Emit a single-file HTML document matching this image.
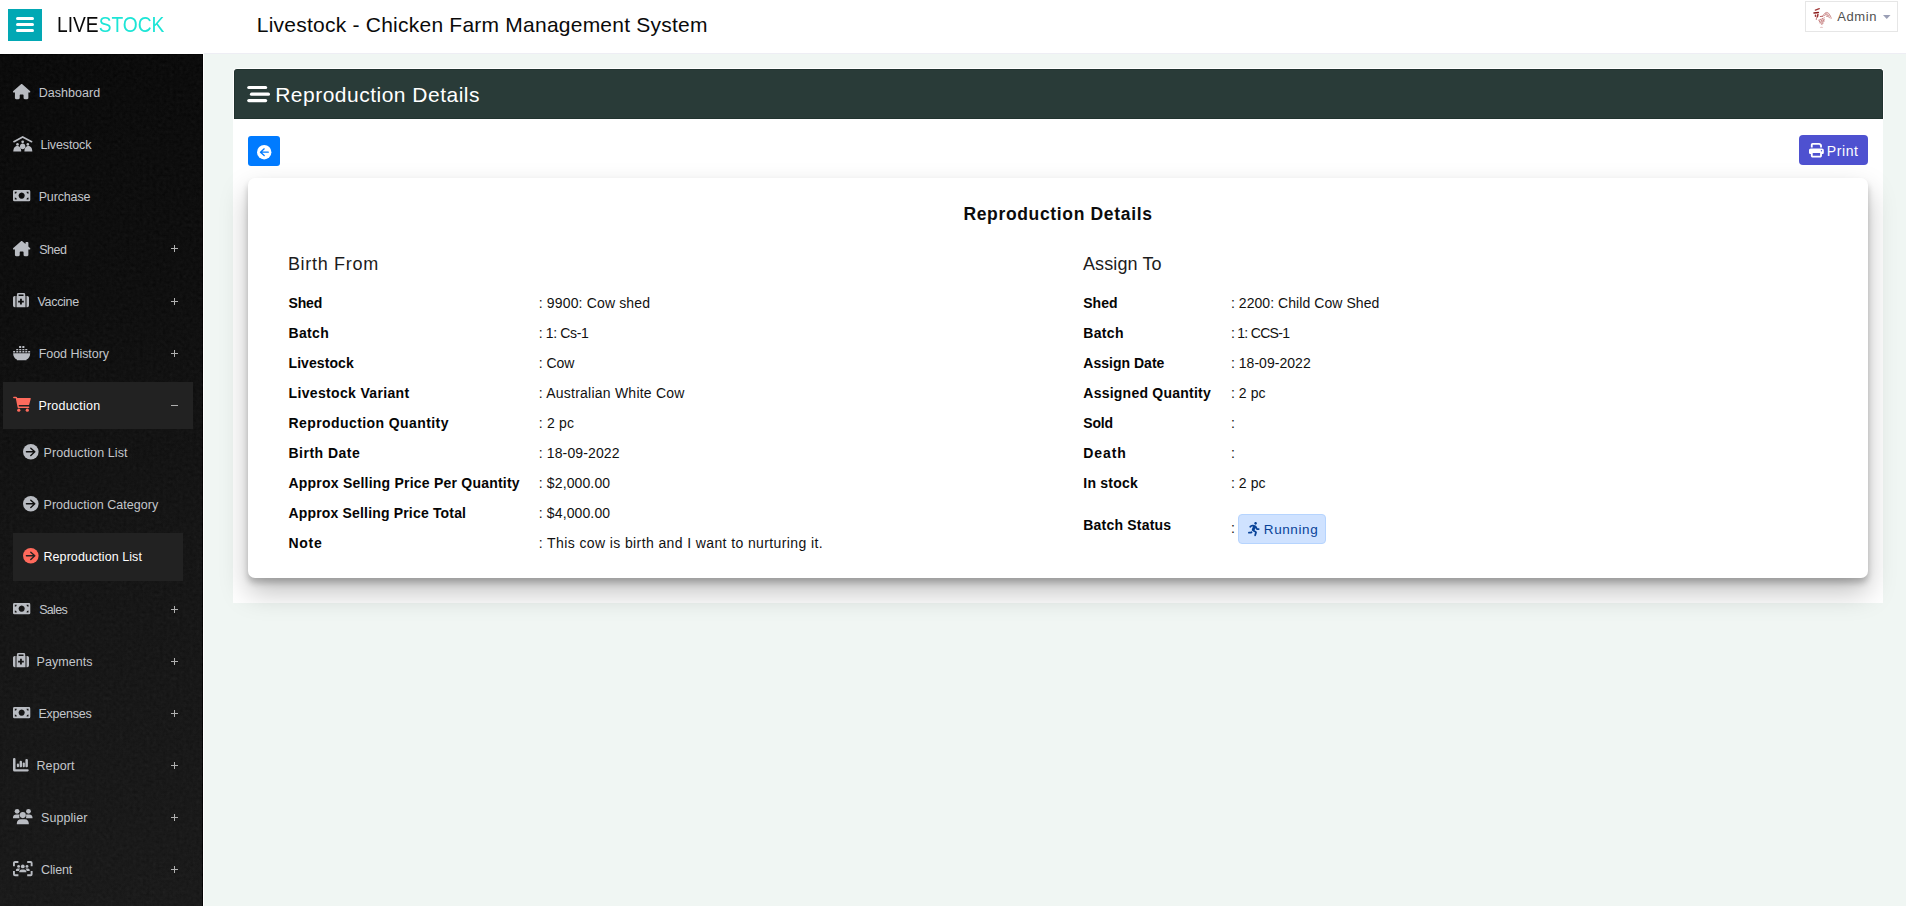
<!DOCTYPE html>
<html lang="en">
<head>
<meta charset="utf-8">
<title>Livestock - Chicken Farm Management System</title>
<style>
*{box-sizing:border-box;margin:0;padding:0}
html,body{width:1906px;height:906px;overflow:hidden}
body{background:#f0f6f3;font-family:"Liberation Sans",sans-serif;font-size:14px;color:#111;position:relative}
.abs{position:absolute}
svg{display:block;overflow:visible}
.t{position:absolute;white-space:nowrap;font-family:"Liberation Sans",sans-serif}
#top{position:absolute;left:0;top:0;width:1906px;height:54px;background:#fff;border-bottom:1px solid #eeeef4}
#gap{position:absolute;left:0;top:53px;width:204px;height:853px;background:#fff}
#burger{position:absolute;left:8px;top:9px;width:34px;height:32px;background:#02a8b4}
#burger i{position:absolute;left:8px;width:18px;height:3px;border-radius:1.500px;background:#fff}
#admin{position:absolute;left:1805px;top:1px;width:93px;height:31px;border:1px solid #e6e6e6;background:#fff}
#caret{position:absolute;left:1883.100px;top:15px;width:0;height:0;border-left:3.750px solid transparent;border-right:3.750px solid transparent;border-top:3.900px solid #9a9fb5}
#side{position:absolute;left:0;top:54px;width:203px;height:852px;border-top:1px solid #000;border-right:1px solid #000;background:linear-gradient(168deg,#060606 0%,#0a0a0a 30%,#111 58%,#161616 100%)}
.hl{position:absolute;background:#222}
.pl{position:absolute;background:#b0b0b0}
#panel{position:absolute;left:233px;top:68px;width:1650px;height:535px;background:#fff;border-radius:4px 4px 0 0}
#phead{position:absolute;left:233px;top:68px;width:1651px;height:51px;background:#293b38;border-radius:4px 4px 0 0;border:1px solid #fff;border-bottom:0;box-shadow:inset 0 0 0 1px #21332f}
#back{position:absolute;left:248px;top:136px;width:32px;height:30px;background:#007bff;border-radius:3px}
#print{position:absolute;left:1799px;top:135px;width:69px;height:30px;background:#4e51d0;border-radius:4px}
#card{position:absolute;left:248px;top:178px;width:1620px;height:400px;background:#fff;border-radius:7px;box-shadow:0 14px 28px rgba(0,0,0,.25),0 5px 6px rgba(0,0,0,.22)}
#badge{position:absolute;left:1238px;top:514px;width:88px;height:30px;background:#cfe2ff;border:1px solid #b6d4fe;border-radius:4px}
</style>
</head>
<body>
<div id="top"></div>
<div id="burger"><i style="top:8px"></i><i style="top:14px"></i><i style="top:20px"></i></div>
<div id="admin"></div>
<svg class="abs" style="left:1808px;top:4px" width="30" height="26" viewBox="0 0 30 26"><g fill="none" stroke-linecap="round" stroke-linejoin="round"><path stroke="#8b0a0a" stroke-width="1.300" opacity=".8" d="M7.400 6.200L11.300 4.700"/><path stroke="#7d0000" stroke-width="1.500" opacity=".9" d="M6 8.900L10.400 8.400"/><path stroke="#8b0a0a" stroke-width="1.500" opacity=".85" d="M7.500 11.200v1M9.900 10.600l-0.500 2.200"/><path stroke="#9a1c1c" stroke-width="1" opacity=".6" d="M8.500 13.800l-0.200 1.700"/><path stroke="#9a1c1c" stroke-width="1" opacity=".7" d="M12.300 12.500l2.400-0.300"/><path stroke="#a02a2a" stroke-width="0.900" opacity=".55" d="M14.800 12.200c1-2.200 2.400-3.700 3.900-3.800c1.800-0.100 3.300 2.400 4.600 5.800M16 11.800c1.300-1.500 3-1.600 4.300 0.200M17.300 9.800c1.500-0.500 3 0.300 3.900 2.200M18.500 12.300c1.400 0 2.600 0.800 3.600 1.900"/><path stroke="#a02a2a" stroke-width="0.800" opacity=".5" d="M10.800 16.300l5.800-2.600M11.300 17.800l5.300-2.400M12 19l4.300-2.200M13.300 20.300l2.200-1.400M11 15.800c0.300 2 1.500 3.700 3.200 4.700M14.500 14.500l1.500 3M12.800 15.200l1.800 3.800"/></g><ellipse cx="13.500" cy="23.300" rx="1.600" ry=".5" fill="#a33" opacity=".35"/></svg>
<svg class="abs" style="left:1883.100px;top:15px" width="7.500" height="3.900" viewBox="0 0 7.500 3.900"><path fill="#9a9fb5" d="M0 0h7.500L3.750 3.900z"/></svg>
<div id="gap"></div>
<div id="side"></div>
<svg class="abs" style="left:0;top:54px" width="203" height="852"><filter id="nz" x="0" y="0" width="100%" height="100%"><feTurbulence type="fractalNoise" baseFrequency="0.300" numOctaves="3" seed="3"/><feColorMatrix type="matrix" values="0 0 0 0 1  0 0 0 0 1  0 0 0 0 1  0.330 0.330 0.330 0 -0.250"/></filter><rect width="203" height="852" filter="url(#nz)" opacity=".085"/></svg>
<div class="hl" style="left:3px;top:382px;width:190px;height:47px"></div>
<div class="hl" style="left:13px;top:533px;width:170px;height:47.500px"></div>
<svg class="abs" style="left:12.7px;top:83.7px" width="17.3" height="15.3" viewBox="0 0 576 512" preserveAspectRatio="none"><path fill="#b9bcc2" d="M575.8 255.5c0 18-15 32.1-32 32.1h-32l.7 160.2c0 2.700-.2 5.400-.5 8.100V472c0 22.100-17.900 40-40 40H456c-1.100 0-2.200 0-3.300-.1c-1.400.1-2.800.1-4.200.1H416 392c-22.100 0-40-17.900-40-40V448 384c0-17.700-14.300-32-32-32H256c-17.700 0-32 14.300-32 32v64 24c0 22.100-17.900 40-40 40H160 128.100c-1.500 0-3-.100-4.500-.200c-1.200.100-2.400.200-3.600.200H104c-22.100 0-40-17.900-40-40V360c0-.900 0-1.900.100-2.800V287.600H32c-18 0-32-14-32-32.100c0-9 3-17 10-24L266.400 8c7-7 15-8 22-8s15 2 21 7L564.800 231.500c8 7 12 15 11 24z"/></svg>
<svg class="abs" style="left:12.7px;top:135.7px" width="19.5" height="15.4" viewBox="0 0 19.5 15.4" ><path fill="none" stroke="#b9bcc2" stroke-width="1.700" stroke-linecap="round" stroke-linejoin="miter" d="M0.900 5.700L9.660 0.950L18.600 5.700"/><g fill="#b9bcc2"><circle cx="4.500" cy="8.400" r="1.350"/><circle cx="9.660" cy="5.800" r="1.350"/><circle cx="14.800" cy="8.400" r="1.350"/><path d="M0.300 15.400C0.300 11.600 2.400 9.900 4.300 9.900S8.200 11.600 8.200 15.400z"/><path d="M11.400 15.400C11.400 11.600 13.400 9.900 15.350 9.900S19.300 11.600 19.300 15.400z"/><path d="M6.900 10.800C6.900 8.600 8.300 7.500 9.660 7.500S12.400 8.600 12.400 10.800C12.400 12.400 11 13.200 9.660 13.200S6.900 12.400 6.900 10.800z"/></g></svg>
<svg class="abs" style="left:12.7px;top:189.9px" width="17.3" height="11.3" viewBox="0 0 17.3 11.3" ><path fill="#b9bcc2" fill-rule="evenodd" d="M1.4 0h14.5a1.4 1.4 0 0 1 1.400 1.400v8.500a1.400 1.400 0 0 1-1.400 1.400H1.400A1.400 1.400 0 0 1 0 9.900V1.400A1.400 1.400 0 0 1 1.400 0zM8.650 2.600a3.050 3.050 0 1 0 .001 0zM1.800 1.800v2a2 2 0 0 0 2-2zM15.500 1.800h-2a2 2 0 0 0 2 2zM1.800 9.500h2a2 2 0 0 0-2-2zM15.500 9.500v-2a2 2 0 0 0-2 2z"/></svg>
<svg class="abs" style="left:12.7px;top:240.8px" width="17.3" height="15.3" viewBox="0 0 576 512" preserveAspectRatio="none"><path fill="#b9bcc2" d="M543.8 287.6c17 0 32-14 32-32.1c1-9-3-17-11-24L512 185V64c0-17.700-14.300-32-32-32H448c-17.700 0-32 14.300-32 32v36.700L309.500 7c-6-5-14-7-21-7s-15 1-22 8L10 231.500c-7 7-10 15-10 24c0 18 14 32.100 32 32.100h32v69.700c-.100.900-.100 1.800-.100 2.800V472c0 22.100 17.900 40 40 40h16c1.200 0 2.400-.100 3.600-.200c1.500.100 3 .200 4.500.200H160h24c22.100 0 40-17.900 40-40V448 384c0-17.700 14.300-32 32-32h64c17.700 0 32 14.300 32 32v64 24c0 22.100 17.900 40 40 40h24 32.500c1.400 0 2.800 0 4.200-.100c1.100.100 2.200.100 3.300.100h16c22.100 0 40-17.900 40-40V455.800c.300-2.600.500-5.300.500-8.100l-.700-160.200h32z"/></svg>
<i class="pl" style="left:171px;top:248.4px;width:7px;height:1px"></i><i class="pl" style="left:174px;top:245.4px;width:1px;height:7px"></i>
<svg class="abs" style="left:12.6px;top:292.8px" width="16.0" height="14.3" viewBox="0 0 16.0 14.3" ><path fill="#b9bcc2" fill-rule="evenodd" d="M5.400 0h5.300a1.500 1.500 0 0 1 1.500 1.500v1.500h-1.700v-1.500h-4.900v1.500h-1.700v-1.500a1.500 1.500 0 0 1 1.500-1.500zM1.700 2.900h0.800v11.400h-0.800a1.700 1.700 0 0 1-1.700-1.700v-8a1.700 1.700 0 0 1 1.700-1.700zM13.500 2.900h0.800a1.700 1.700 0 0 1 1.700 1.700v8a1.700 1.700 0 0 1-1.700 1.700h-0.800zM3.500 2.900h9v11.400h-9zM7.050 5.700h1.800v1.950h1.950v1.800h-1.950v1.950h-1.800v-1.950h-1.950v-1.800h1.950z"/></svg>
<i class="pl" style="left:171px;top:300.6px;width:7px;height:1px"></i><i class="pl" style="left:174px;top:297.6px;width:1px;height:7px"></i>
<svg class="abs" style="left:12.8px;top:345.8px" width="17.3" height="14.3" viewBox="0 0 17.3 14.3" ><g fill="#b9bcc2"><path d="M0.100 7.200H17.200C17.200 10.500 15.600 12.600 13.500 13.600V14.300H3.900V13.600C1.800 12.600 0.100 10.500 0.100 7.200z"/><rect x="6.1" y="0" width="2.100" height="2.100" rx=".3"/><rect x="9.3" y="0" width="2.100" height="2.100" rx=".3"/><rect x="3.2" y="2.900" width="2.100" height="1.400" rx=".3"/><rect x="6.2" y="2.900" width="2.100" height="1.400" rx=".3"/><rect x="9.3" y="2.900" width="2.100" height="1.400" rx=".3"/><rect x="12.2" y="2.900" width="2.100" height="1.400" rx=".3"/><rect x="0.1" y="5.100" width="2.100" height="1.500" rx=".3"/><rect x="3.2" y="5.100" width="2.100" height="1.500" rx=".3"/><rect x="6.2" y="5.100" width="2.100" height="1.500" rx=".3"/><rect x="9.3" y="5.100" width="2.100" height="1.500" rx=".3"/><rect x="12.2" y="5.100" width="2.100" height="1.500" rx=".3"/><rect x="15.1" y="5.100" width="2.100" height="1.500" rx=".3"/></g></svg>
<i class="pl" style="left:171px;top:352.8px;width:7px;height:1px"></i><i class="pl" style="left:174px;top:349.8px;width:1px;height:7px"></i>
<svg class="abs" style="left:12.8px;top:396.4px" width="17.9" height="15.8" viewBox="0 0 17.9 15.8" ><path fill="#ff6a5c" d="M3.600 1.900H17.200a.6 .6 0 0 1 .580 .760L16.200 8.400a.900 .900 0 0 1-.870 .650H5.100z"/><path fill="none" stroke="#ff6a5c" stroke-width="1.500" stroke-linecap="round" stroke-linejoin="round" d="M0.850 1.500H2.750a.800 .800 0 0 1 .780 .640L5.300 11.200H15.600"/><circle cx="5.800" cy="14.200" r="1.600" fill="#ff6a5c"/><circle cx="14.300" cy="14.200" r="1.600" fill="#ff6a5c"/></svg>
<i class="pl" style="left:171px;top:405.1px;width:7px;height:1px"></i>
<svg class="abs" style="left:22.7px;top:443.6px" width="15.6" height="15.6" viewBox="0 0 16 16" ><circle cx="8" cy="8" r="8" fill="#b9bcc2"/><path fill="none" stroke="#0e0e0e" stroke-width="1.45" stroke-linecap="round" stroke-linejoin="round" d="M3.500 8H12M8 4.300L12.100 8L8 11.700"/></svg>
<svg class="abs" style="left:22.7px;top:495.5px" width="15.6" height="15.6" viewBox="0 0 16 16" ><circle cx="8" cy="8" r="8" fill="#b9bcc2"/><path fill="none" stroke="#0f0f0f" stroke-width="1.45" stroke-linecap="round" stroke-linejoin="round" d="M3.500 8H12M8 4.300L12.100 8L8 11.700"/></svg>
<svg class="abs" style="left:22.7px;top:547.6px" width="15.6" height="15.6" viewBox="0 0 16 16" ><circle cx="8" cy="8" r="8" fill="#ff6a5c"/><path fill="none" stroke="#222" stroke-width="1.45" stroke-linecap="round" stroke-linejoin="round" d="M3.500 8H12M8 4.300L12.100 8L8 11.700"/></svg>
<svg class="abs" style="left:12.7px;top:603.0px" width="17.3" height="11.3" viewBox="0 0 17.3 11.3" ><path fill="#b9bcc2" fill-rule="evenodd" d="M1.4 0h14.5a1.4 1.4 0 0 1 1.400 1.400v8.500a1.400 1.400 0 0 1-1.400 1.400H1.400A1.400 1.400 0 0 1 0 9.900V1.400A1.400 1.400 0 0 1 1.400 0zM8.650 2.600a3.050 3.050 0 1 0 .001 0zM1.800 1.800v2a2 2 0 0 0 2-2zM15.500 1.800h-2a2 2 0 0 0 2 2zM1.800 9.500h2a2 2 0 0 0-2-2zM15.500 9.500v-2a2 2 0 0 0-2 2z"/></svg>
<i class="pl" style="left:171px;top:609.1px;width:7px;height:1px"></i><i class="pl" style="left:174px;top:606.1px;width:1px;height:7px"></i>
<svg class="abs" style="left:12.6px;top:652.9px" width="16.0" height="14.3" viewBox="0 0 16.0 14.3" ><path fill="#b9bcc2" fill-rule="evenodd" d="M5.400 0h5.300a1.500 1.500 0 0 1 1.500 1.500v1.500h-1.700v-1.500h-4.900v1.500h-1.700v-1.500a1.500 1.500 0 0 1 1.500-1.500zM1.700 2.900h0.800v11.400h-0.800a1.700 1.700 0 0 1-1.700-1.700v-8a1.700 1.700 0 0 1 1.700-1.700zM13.500 2.900h0.800a1.700 1.700 0 0 1 1.700 1.700v8a1.700 1.700 0 0 1-1.700 1.700h-0.800zM3.500 2.900h9v11.400h-9zM7.050 5.700h1.800v1.950h1.950v1.800h-1.950v1.950h-1.800v-1.950h-1.950v-1.800h1.950z"/></svg>
<i class="pl" style="left:171px;top:661.2px;width:7px;height:1px"></i><i class="pl" style="left:174px;top:658.2px;width:1px;height:7px"></i>
<svg class="abs" style="left:12.7px;top:706.7px" width="17.3" height="11.3" viewBox="0 0 17.3 11.3" ><path fill="#b9bcc2" fill-rule="evenodd" d="M1.4 0h14.5a1.4 1.4 0 0 1 1.400 1.400v8.500a1.400 1.400 0 0 1-1.400 1.400H1.400A1.400 1.400 0 0 1 0 9.900V1.400A1.400 1.400 0 0 1 1.400 0zM8.650 2.600a3.050 3.050 0 1 0 .001 0zM1.800 1.800v2a2 2 0 0 0 2-2zM15.500 1.800h-2a2 2 0 0 0 2 2zM1.800 9.500h2a2 2 0 0 0-2-2zM15.500 9.500v-2a2 2 0 0 0-2 2z"/></svg>
<i class="pl" style="left:171px;top:713.1px;width:7px;height:1px"></i><i class="pl" style="left:174px;top:710.1px;width:1px;height:7px"></i>
<svg class="abs" style="left:12.6px;top:757.8px" width="15.8" height="13.4" viewBox="0 0 15.8 13.4" ><g fill="#b9bcc2"><path d="M1.100 0h0.300a1.100 1.100 0 0 1 1.100 1.100v10.200h12.200a1.050 1.050 0 0 1 0 2.100h-13.200a1.500 1.500 0 0 1-1.500-1.500v-10.800a1.100 1.100 0 0 1 1.100-1.100z"/><rect x="3.850" y="5.400" width="2.150" height="3.900" rx="1"/><rect x="6.600" y="2.800" width="2.400" height="6.500" rx="1"/><rect x="9.700" y="4.500" width="2.150" height="4.800" rx="1"/><rect x="12.400" y="0.900" width="2.500" height="8.400" rx="1"/></g></svg>
<i class="pl" style="left:171px;top:765.1px;width:7px;height:1px"></i><i class="pl" style="left:174px;top:762.1px;width:1px;height:7px"></i>
<svg class="abs" style="left:12.6px;top:808.8px" width="19.5" height="15.2" viewBox="0 0 19.5 15.2" ><g fill="#b9bcc2"><circle cx="4.100" cy="2.300" r="2.400"/><circle cx="15.500" cy="2.300" r="2.400"/><circle cx="9.800" cy="6.100" r="3.050"/><path d="M3.100 5.450h2c0.700 0 1.200 0.150 1.600 0.400c-0.600 1.100-0.600 2.300-0.100 3.300h-6.600v-0.800c0-1.700 1.400-2.900 3.100-2.900z"/><path d="M16.400 5.450h-2c-0.700 0-1.200 0.150-1.600 0.400c0.600 1.100 0.600 2.300 0.100 3.300h6.600v-0.800c0-1.700-1.400-2.900-3.100-2.900z"/><path d="M7.700 10.200h4.200c2.300 0 3.900 1.800 3.900 4.100v0.900h-12v-0.900c0-2.300 1.600-4.100 3.900-4.100z"/></g></svg>
<i class="pl" style="left:171px;top:817.1px;width:7px;height:1px"></i><i class="pl" style="left:174px;top:814.1px;width:1px;height:7px"></i>
<svg class="abs" style="left:12.6px;top:860.9px" width="19.6" height="15.2" viewBox="0 0 19.6 15.2" ><g fill="none" stroke="#b9bcc2" stroke-width="1.900" stroke-linecap="butt" stroke-linejoin="round"><path d="M0.950 5.200v-3.250a1 1 0 0 1 1-1h3.450M14.200 0.950h3.450a1 1 0 0 1 1 1v3.250M18.650 10v3.250a1 1 0 0 1-1 1h-3.450M5.400 14.250h-3.450a1 1 0 0 1-1-1v-3.250"/></g><g fill="#b9bcc2"><circle cx="5.600" cy="5.400" r="1.450"/><circle cx="14" cy="5.400" r="1.450"/><circle cx="9.800" cy="5.400" r="1.900"/><path d="M4.600 7.400h1.900c0.300 0 0.500 0.050 0.700 0.150c-0.800 0.700-1.200 1.500-1.300 2.450h-2.600c-0.300 0-0.500-0.200-0.500-0.500c0-1.200 0.800-2.100 1.800-2.100z"/><path d="M15 7.400h-1.900c-0.300 0-0.500 0.050-0.700 0.150c0.800 0.700 1.200 1.500 1.300 2.450h2.600c0.300 0 0.500-0.200 0.500-0.500c0-1.200-0.800-2.100-1.800-2.100z"/><path d="M8.700 8.500h2.200c1.500 0 2.500 1.100 2.500 2.300a0.500 0.500 0 0 1-0.500 0.500h-6.200a0.500 0.500 0 0 1-0.500-0.500c0-1.200 1-2.300 2.500-2.300z"/></g></svg>
<i class="pl" style="left:171px;top:869.2px;width:7px;height:1px"></i><i class="pl" style="left:174px;top:866.2px;width:1px;height:7px"></i>
<div id="panel"></div>
<div id="phead"></div>
<svg class="abs" style="left:247px;top:85px" width="24" height="18" viewBox="0 0 24 18"><g fill="#fff"><rect x="0.200" y="0.900" width="20" height="3.200" rx="1.600"/><rect x="2.900" y="7.600" width="20.100" height="3.200" rx="1.600"/><rect x="0.200" y="14" width="20" height="3.200" rx="1.600"/></g></svg>
<div id="back"></div>
<svg class="abs" style="left:257px;top:144.6px" width="14.4" height="14.4" viewBox="0 0 16 16" ><circle cx="8" cy="8" r="8" fill="#fff"/><path transform="translate(16 0) scale(-1 1)" fill="none" stroke="#007bff" stroke-width="1.5" stroke-linecap="round" stroke-linejoin="round" d="M3.500 8H12M8 4.300L12.100 8L8 11.700"/></svg>
<div id="print"></div>
<svg class="abs" style="left:1809.1px;top:143.4px" width="14.8" height="14.6" viewBox="0 0 512 512" preserveAspectRatio="none"><path fill="#fff" d="M128 0C92.7 0 64 28.7 64 64v96h64V64H354.7L384 93.3V160h64V93.3c0-17-6.700-33.300-18.700-45.300L400 18.700C388 6.700 371.700 0 354.700 0H128zM384 352v32 64H128V384 368 352H384zm64 32h32c17.700 0 32-14.300 32-32V256c0-35.300-28.700-64-64-64H64c-35.300 0-64 28.700-64 64v96c0 17.700 14.300 32 32 32H64v64c0 35.300 28.700 64 64 64H384c35.300 0 64-28.700 64-64V384zM432 248a24 24 0 1 1 0 48 24 24 0 1 1 0-48z"/></svg>
<div id="card"></div>
<div id="badge"></div>
<svg class="abs" style="left:1247.8px;top:521.8px" width="11.6" height="14.2" viewBox="0 0 416 512" preserveAspectRatio="none"><path fill="#084298" d="M272 96c26.510 0 48-21.490 48-48S298.510 0 272 0s-48 21.490-48 48 21.490 48 48 48zM113.690 317.470l-14.800 34.520H32c-17.670 0-32 14.330-32 32s14.330 32 32 32h77.450c19.250 0 36.580-11.440 44.110-29.090l8.790-20.520-10.670-6.300c-17.320-10.230-30.060-25.370-37.990-42.610zM384 223.990h-44.030l-26.060-53.250c-12.500-25.550-35.450-44.230-61.780-50.940l-71.080-21.140c-28.300-6.800-57.770-.55-80.840 17.140l-39.670 30.410c-14.030 10.750-16.690 30.830-5.920 44.860s30.840 16.660 44.860 5.920l39.690-30.410c7.670-5.890 17.440-8 25.270-6.140l14.700 4.370-37.460 87.390c-12.620 29.480-1.310 64.010 26.300 80.310l84.980 50.170-27.470 87.730c-5.280 16.860 4.110 34.810 20.970 40.090 3.190 1 6.410 1.480 9.580 1.480 13.610 0 26.230-8.770 30.520-22.450l31.640-101.060c5.910-20.770-2.890-43.080-21.640-54.390l-61.240-36.140 31.310-78.280 20.270 41.430c8 16.340 24.920 26.890 43.110 26.890H384c17.670 0 32-14.330 32-32s-14.330-31.990-32-31.990z"/></svg>
<span class="t" style="left:57.01px;top:10px;font-size:21.5px;line-height:30px;color:#0a0a0a;transform:scaleX(0.8929);transform-origin:0 0">LIVE<b style="font-weight:400;color:#1de5d6">STOCK</b></span>
<span class="t" style="left:256.8px;top:10px;font-size:21px;line-height:29px;color:#0a0a0a;letter-spacing:0.233px">Livestock - Chicken Farm Management System</span>
<span class="t" style="left:1837.3px;top:8px;font-size:13px;line-height:18px;color:#505050;letter-spacing:0.57px">Admin</span>
<span class="t" style="left:38.7px;top:83px;font-size:12.5px;line-height:20px;color:#c3c6cb;letter-spacing:0.038px">Dashboard</span>
<span class="t" style="left:40.4px;top:135px;font-size:12.5px;line-height:20px;color:#c3c6cb;letter-spacing:-0.132px">Livestock</span>
<span class="t" style="left:38.7px;top:187px;font-size:12.5px;line-height:20px;color:#c3c6cb;letter-spacing:-0.151px">Purchase</span>
<span class="t" style="left:39.2px;top:240px;font-size:12.5px;line-height:20px;color:#c3c6cb;letter-spacing:-0.447px">Shed</span>
<span class="t" style="left:37.5px;top:292px;font-size:12.5px;line-height:20px;color:#c3c6cb;letter-spacing:-0.315px">Vaccine</span>
<span class="t" style="left:38.7px;top:344px;font-size:12.5px;line-height:20px;color:#c3c6cb;letter-spacing:-0.046px">Food History</span>
<span class="t" style="left:38.4px;top:396px;font-size:12.5px;line-height:20px;color:#fff;letter-spacing:0.221px">Production</span>
<span class="t" style="left:43.5px;top:443px;font-size:12.5px;line-height:20px;color:#c3c6cb;letter-spacing:0.092px">Production List</span>
<span class="t" style="left:43.5px;top:495px;font-size:12.5px;line-height:20px;color:#c3c6cb;letter-spacing:0.039px">Production Category</span>
<span class="t" style="left:43.5px;top:547px;font-size:12.5px;line-height:20px;color:#fff;letter-spacing:0.068px">Reproduction List</span>
<span class="t" style="left:39.2px;top:600px;font-size:12.5px;line-height:20px;color:#c3c6cb;letter-spacing:-0.68px">Sales</span>
<span class="t" style="left:36.5px;top:652px;font-size:12.5px;line-height:20px;color:#c3c6cb;letter-spacing:0.053px">Payments</span>
<span class="t" style="left:38.5px;top:704px;font-size:12.5px;line-height:20px;color:#c3c6cb;letter-spacing:-0.249px">Expenses</span>
<span class="t" style="left:36.5px;top:756px;font-size:12.5px;line-height:20px;color:#c3c6cb;letter-spacing:0.091px">Report</span>
<span class="t" style="left:41px;top:808px;font-size:12.5px;line-height:20px;color:#c3c6cb;letter-spacing:0.072px">Supplier</span>
<span class="t" style="left:41px;top:860px;font-size:12.5px;line-height:20px;color:#c3c6cb;letter-spacing:-0.137px">Client</span>
<span class="t" style="left:275.2px;top:80px;font-size:21px;line-height:29px;color:#fff;letter-spacing:0.493px">Reproduction Details</span>
<span class="t" style="left:1826.7px;top:141px;font-size:14px;line-height:20px;color:#fff;letter-spacing:0.626px">Print</span>
<span class="t" style="left:963.4px;top:202px;font-size:17.5px;line-height:24px;color:#0c0c0c;font-weight:700;letter-spacing:0.66px">Reproduction Details</span>
<span class="t" style="left:287.9px;top:252px;font-size:18px;line-height:25px;color:#1c1c1c;letter-spacing:0.699px">Birth From</span>
<span class="t" style="left:1082.9px;top:252px;font-size:18px;line-height:25px;color:#1c1c1c;letter-spacing:0.122px">Assign To</span>
<span class="t" style="left:288.5px;top:293px;font-size:14px;line-height:20px;color:#050505;font-weight:700;letter-spacing:-0.159px">Shed</span>
<span class="t" style="left:538.8px;top:293px;font-size:14px;line-height:20px;color:#111;letter-spacing:0.149px">: 9900: Cow shed</span>
<span class="t" style="left:288.5px;top:323px;font-size:14px;line-height:20px;color:#050505;font-weight:700;letter-spacing:0.339px">Batch</span>
<span class="t" style="left:538.8px;top:323px;font-size:14px;line-height:20px;color:#111;letter-spacing:-0.365px">: 1: Cs-1</span>
<span class="t" style="left:288.5px;top:353px;font-size:14px;line-height:20px;color:#050505;font-weight:700;letter-spacing:0.075px">Livestock</span>
<span class="t" style="left:538.8px;top:353px;font-size:14px;line-height:20px;color:#111;letter-spacing:-0.069px">: Cow</span>
<span class="t" style="left:288.5px;top:383px;font-size:14px;line-height:20px;color:#050505;font-weight:700;letter-spacing:0.344px">Livestock Variant</span>
<span class="t" style="left:538.8px;top:383px;font-size:14px;line-height:20px;color:#111;letter-spacing:0.229px">: Australian White Cow</span>
<span class="t" style="left:288.5px;top:413px;font-size:14px;line-height:20px;color:#050505;font-weight:700;letter-spacing:0.416px">Reproduction Quantity</span>
<span class="t" style="left:538.8px;top:413px;font-size:14px;line-height:20px;color:#111;letter-spacing:0.212px">: 2 pc</span>
<span class="t" style="left:288.5px;top:443px;font-size:14px;line-height:20px;color:#050505;font-weight:700;letter-spacing:0.477px">Birth Date</span>
<span class="t" style="left:538.8px;top:443px;font-size:14px;line-height:20px;color:#111;letter-spacing:0.118px">: 18-09-2022</span>
<span class="t" style="left:288.5px;top:473px;font-size:14px;line-height:20px;color:#050505;font-weight:700;letter-spacing:0.22px">Approx Selling Price Per Quantity</span>
<span class="t" style="left:538.8px;top:473px;font-size:14px;line-height:20px;color:#111;letter-spacing:0.122px">: $2,000.00</span>
<span class="t" style="left:288.5px;top:503px;font-size:14px;line-height:20px;color:#050505;font-weight:700;letter-spacing:0.171px">Approx Selling Price Total</span>
<span class="t" style="left:538.8px;top:503px;font-size:14px;line-height:20px;color:#111;letter-spacing:0.122px">: $4,000.00</span>
<span class="t" style="left:288.5px;top:533px;font-size:14px;line-height:20px;color:#050505;font-weight:700;letter-spacing:0.725px">Note</span>
<span class="t" style="left:538.8px;top:533px;font-size:14px;line-height:20px;color:#111;letter-spacing:0.391px">: This cow is birth and I want to nurturing it.</span>
<span class="t" style="left:1083.3px;top:293px;font-size:14px;line-height:20px;color:#050505;font-weight:700;letter-spacing:-0.025px">Shed</span>
<span class="t" style="left:1230.9px;top:293px;font-size:14px;line-height:20px;color:#111;letter-spacing:0.062px">: 2200: Child Cow Shed</span>
<span class="t" style="left:1083.3px;top:323px;font-size:14px;line-height:20px;color:#050505;font-weight:700;letter-spacing:0.339px">Batch</span>
<span class="t" style="left:1230.9px;top:323px;font-size:14px;line-height:20px;color:#111;letter-spacing:-0.696px">: 1: CCS-1</span>
<span class="t" style="left:1083.3px;top:353px;font-size:14px;line-height:20px;color:#050505;font-weight:700;letter-spacing:0.018px">Assign Date</span>
<span class="t" style="left:1230.9px;top:353px;font-size:14px;line-height:20px;color:#111;letter-spacing:0.036px">: 18-09-2022</span>
<span class="t" style="left:1083.3px;top:383px;font-size:14px;line-height:20px;color:#050505;font-weight:700;letter-spacing:0.238px">Assigned Quantity</span>
<span class="t" style="left:1230.9px;top:383px;font-size:14px;line-height:20px;color:#111;letter-spacing:0.072px">: 2 pc</span>
<span class="t" style="left:1083.3px;top:413px;font-size:14px;line-height:20px;color:#050505;font-weight:700;letter-spacing:-0.226px">Sold</span>
<span class="t" style="left:1230.9px;top:413px;font-size:14px;line-height:20px;color:#111">:</span>
<span class="t" style="left:1083.3px;top:443px;font-size:14px;line-height:20px;color:#050505;font-weight:700;letter-spacing:0.914px">Death</span>
<span class="t" style="left:1230.9px;top:443px;font-size:14px;line-height:20px;color:#111">:</span>
<span class="t" style="left:1083.3px;top:473px;font-size:14px;line-height:20px;color:#050505;font-weight:700;letter-spacing:0.226px">In stock</span>
<span class="t" style="left:1230.9px;top:473px;font-size:14px;line-height:20px;color:#111;letter-spacing:0.072px">: 2 pc</span>
<span class="t" style="left:1083.3px;top:515px;font-size:14px;line-height:20px;color:#050505;font-weight:700;letter-spacing:0.201px">Batch Status</span>
<span class="t" style="left:1230.9px;top:518px;font-size:14px;line-height:20px;color:#111">:</span>
<span class="t" style="left:1263.8px;top:521px;font-size:13.5px;line-height:18px;color:#084298;letter-spacing:0.603px">Running</span>
</body>
</html>
